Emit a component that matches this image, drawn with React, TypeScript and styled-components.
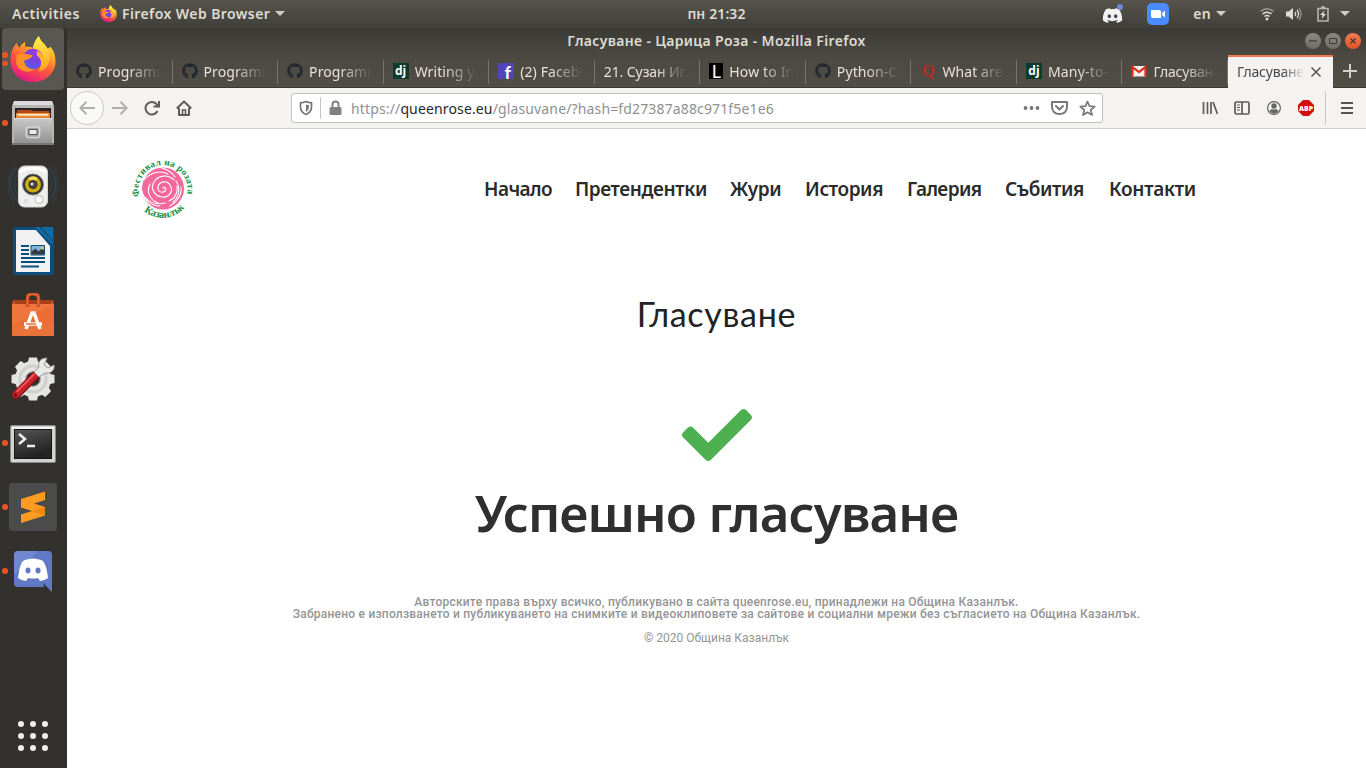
import React from "react";
import styled, { createGlobalStyle, css } from "styled-components";
import { FaCheck, FaGithub, FaDiscord } from "react-icons/fa";

const GlobalStyle = createGlobalStyle`
  * { box-sizing: border-box; }
  body { margin: 0; overflow: hidden; background: #fff; }
  svg { display: block; flex: none; }
`;

const uiFont = css`
  font-family: "Noto Sans", "Open Sans", sans-serif;
`;

const Desktop = styled.div`
  ${uiFont}
  width: 1366px;
  height: 768px;
  display: flex;
  flex-direction: column;
`;

const TopBar = styled.header`
  height: 28px;
  flex: none;
  display: grid;
  grid-template-columns: 1fr auto 1fr;
  align-items: center;
  padding: 0 16px 1px 12px;
  background: linear-gradient(#57544c, #403f3a);
  color: #dfdbd2;
  font-size: 14px;
  font-weight: 600;
`;

const TopGroup = styled.div<{ $end?: boolean }>`
  display: flex;
  align-items: center;
  justify-content: ${(p) => (p.$end ? "flex-end" : "flex-start")};
`;

const Label = styled.span<{ $spacing?: number; $ml?: number; $mr?: number }>`
  white-space: nowrap;
  letter-spacing: ${(p) => p.$spacing ?? 0}px;
  margin-left: ${(p) => p.$ml ?? 0}px;
  margin-right: ${(p) => p.$mr ?? 0}px;
`;

const Caret = styled.i<{ $ml?: number }>`
  border: 5px solid transparent;
  border-top-color: #d0cdc5;
  border-bottom: 0;
  margin-left: ${(p) => p.$ml ?? 5}px;
`;

const Gap = styled.span<{ $w: number }>`
  flex: none;
  width: ${(p) => p.$w}px;
`;

const Workspace = styled.div`
  flex: 1;
  display: flex;
  min-height: 0;
`;

const Dock = styled.nav`
  width: 67px;
  flex: none;
  display: flex;
  flex-direction: column;
  background: #33312d;
`;

const DockItem = styled.div<{ $first?: boolean }>`
  height: ${(p) => (p.$first ? 62 : 64)}px;
  margin-bottom: ${(p) => (p.$first ? 1 : 0)}px;
  display: grid;
  grid-template-columns: 8px 50px;
  align-items: center;
`;

const DockTile = styled.div<{ $active?: boolean }>`
  grid-area: 1 / 1 / 2 / 3;
  margin-left: 2px;
  width: 62px;
  height: 62px;
  border-radius: 4px;
  display: flex;
  align-items: center;
  justify-content: center;
  background: ${(p) => (p.$active ? "#595752" : "transparent")};
`;

const Dots = styled.div`
  grid-area: 1 / 1 / 2 / 2;
  display: flex;
  flex-direction: column;
  align-items: center;
  gap: 3px;
  z-index: 1;
  padding-left: 2px;
`;

const Dot = styled.i`
  width: 5.5px;
  height: 5.5px;
  border-radius: 50%;
  background: #e95420;
`;

const AppsButton = styled.div`
  margin: auto 0 17px 18px;
  display: grid;
  grid-template-columns: repeat(3, 6px);
  gap: 6px;
`;

const AppDot = styled.i`
  height: 6px;
  border-radius: 50%;
  background: #eeeeec;
`;

const Window = styled.main`
  flex: 1;
  min-width: 0;
  display: flex;
  flex-direction: column;
  background: #fff;
`;

const TitleBar = styled.div`
  height: 27px;
  flex: none;
  display: grid;
  grid-template-columns: 1fr auto 1fr;
  align-items: center;
  padding: 0 5px 2px;
  color: #dfdbd2;
  font-size: 14px;
  font-weight: 600;
  background: linear-gradient(#3b3a36, #4c4942);
`;

const WindowButtons = styled.div`
  display: flex;
  justify-content: flex-end;
  gap: 4px;
`;

const WindowButton = styled.span<{ $close?: boolean }>`
  width: 16px;
  height: 16px;
  border-radius: 50%;
  display: flex;
  align-items: center;
  justify-content: center;
  background: ${(p) => (p.$close ? "linear-gradient(#f37b54, #e35425)" : "linear-gradient(#8b8982, #6f6d66)")};
`;

const TabStrip = styled.div`
  height: 33px;
  flex: none;
  display: flex;
  background: linear-gradient(#4c4942, #514e46);
  border-bottom: 1px solid #393834;
`;

const Tab = styled.div`
  width: 105.55px;
  flex: none;
  display: flex;
  align-items: center;
  padding: 0 12px 0 9px;
  gap: 6px;
  color: #e6e2d9;
  font-size: 14px;
  background: linear-gradient(#77756d, #77756d) right 5px / 1px 24px no-repeat;
`;

const TabText = styled.span<{ $spacing?: number; $fade?: number }>`
  flex: 1;
  min-width: 0;
  overflow: hidden;
  white-space: nowrap;
  letter-spacing: ${(p) => p.$spacing ?? 0.1}px;
  mask-image: linear-gradient(to left, transparent 0, #000 ${(p) => p.$fade ?? 32}px);
`;

const ActiveTab = styled(Tab)`
  width: 105px;
  height: 33px;
  background: #f4f3f1;
  color: #45474a;
  border-top: 2px solid #ef7a4e;
  gap: 5px;
  padding: 0 11px 2px 9px;
`;

const NewTab = styled.div`
  flex: 1;
  display: flex;
  align-items: center;
  justify-content: center;
`;

const Favicon = styled.span<{ $bg?: string; $color?: string; $w?: number }>`
  width: ${(p) => p.$w ?? 16}px;
  height: 16px;
  flex: none;
  display: flex;
  align-items: center;
  justify-content: center;
  overflow: hidden;
  background: ${(p) => p.$bg ?? "transparent"};
  color: ${(p) => p.$color ?? "#fff"};
  font: 700 12px/16px "Open Sans", sans-serif;
`;

const QuoraMark = styled(Favicon)`
  font: 700 17px/16px "Liberation Serif", serif;
`;

const FacebookMark = styled(Favicon)`
  font: 700 18px/20px "Lato", sans-serif;
  padding: 3px 0 0 3px;
`;

const LetterMark = styled(Favicon)`
  font: 400 18px/16px "Lato", sans-serif;
`;

const NavBar = styled.div`
  height: 41px;
  flex: none;
  display: flex;
  align-items: center;
  background: #f4f3f1;
  border-bottom: 1px solid #cfcdca;
  padding-left: 3px;
`;

const BackButton = styled.span`
  width: 34px;
  height: 34px;
  border-radius: 50%;
  border: 1px solid #cccac8;
  background: #f9f9f8;
  display: flex;
  align-items: center;
  justify-content: center;
`;

const AddressBar = styled.div`
  width: 812px;
  height: 30px;
  margin-left: 99px;
  display: flex;
  align-items: center;
  padding: 0 6px 0 7px;
  background: #fff;
  border: 1px solid #c4c1bd;
  border-radius: 3px;
`;

const Rule = styled.i<{ $h: number }>`
  width: 1px;
  height: ${(p) => p.$h}px;
  background: #c9c7c5;
`;

const Url = styled.span`
  flex: 1;
  margin-left: 9px;
  font-size: 14px;
  letter-spacing: 0.14px;
  color: #8f9092;
  white-space: nowrap;
`;

const Host = styled.b`
  font-weight: 400;
  color: #25272a;
`;

const BrowserTools = styled.div`
  flex: 1;
  display: flex;
  align-items: center;
  justify-content: flex-end;
  padding-right: 11px;
  gap: 16px;
`;

const Page = styled.section`
  flex: 1;
  display: flex;
  flex-direction: column;
  align-items: center;
`;

const SiteHeader = styled.div`
  width: 100%;
  height: 120px;
  display: flex;
  align-items: center;
  justify-content: space-between;
  padding: 0 170px 0 64px;
`;

const SiteMenu = styled.nav`
  display: flex;
  gap: 24px;
  font: 600 19px/24px "Noto Sans", sans-serif;
  color: #2b2b2b;
`;

const MenuItem = styled.a<{ $w: number; $spacing: number }>`
  width: ${(p) => p.$w}px;
  white-space: nowrap;
  letter-spacing: ${(p) => p.$spacing}px;
`;

const PageTitle = styled.h2`
  margin: 43px 0 0;
  font: 400 34px/44px "Lato", sans-serif;
  letter-spacing: 0.7px;
  color: #222;
`;

const CheckMark = styled.div`
  margin-top: 64px;
  color: #4caf50;
`;

const Headline = styled.h1`
  margin: 12px 0 0;
  font: 600 51px/60px "Noto Sans", sans-serif;
  letter-spacing: -0.9px;
  color: #2f2f2f;
  white-space: nowrap;
`;

const Footer = styled.footer`
  margin-top: 54px;
  text-align: center;
  font: 500 12px/12px Roboto, sans-serif;
  color: #959595;
`;

const FooterLine = styled.div`
  white-space: nowrap;
  letter-spacing: 0.23px;
`;

const Copyright = styled.div`
  margin-top: 12px;
  font-weight: 400;
`;

const FirefoxIcon = ({ size, id }: { size: number; id: string }) => (
  <svg width={size} height={size} viewBox="0 0 46 47">
    <defs>
      <linearGradient id={id + "a"} x1=".8" y1="0" x2=".3" y2="1">
        <stop offset="0" stopColor="#fff44f" />
        <stop offset=".3" stopColor="#ffb229" />
        <stop offset=".6" stopColor="#ff5b38" />
        <stop offset="1" stopColor="#e31587" />
      </linearGradient>
      <radialGradient id={id + "b"} cx=".65" cy=".2" r=".8">
        <stop offset="0" stopColor="#a23be8" />
        <stop offset=".5" stopColor="#7a3fe0" />
        <stop offset="1" stopColor="#5a5de8" />
      </radialGradient>
      <linearGradient id={id + "c"} x1="0" y1="0" x2="0" y2="1">
        <stop offset="0" stopColor="#fff34a" />
        <stop offset="1" stopColor="#ff9b26" />
      </linearGradient>
    </defs>
    <path fill={`url(#${id}a)`} d="M29 0c1 5 6 8 9 13l3-2c4 5 5 10 5 15 0 12-10 21-23 21S0 38 0 25C0 18 2 12 5 9l1-2c1 2 2 4 3 5 2-3 4-5 6-6v5c3 0 6 0 8 1 1-5 3-9 6-12z" />
    <path fill={`url(#${id}c)`} d="M29 0c1 5 6 8 9 13 4 9 2 20-9 24 7-6 6-16 0-21-2-2-4-3-6-4 1-5 3-9 6-12z" />
    <circle cx="23" cy="23.500" r="10.500" fill={`url(#${id}b)`} />
    <path fill="#ff9128" d="M6 20c5-3 11-2 17 0-2 3-5 4-9 5 0 6 5 9 11 9-7 5-17 2-19-6z" />
    <path fill="#ffb52b" d="M27 15c5 2 8 7 7 13 0 4-3 7-6 8 5-5 4-13-1-16z" />
  </svg>
);

const FilesIcon = () => (
  <svg width="44" height="46" viewBox="0 0 44 46">
    <defs>
      <linearGradient id="files" x1="0" y1="0" x2="0" y2="1">
        <stop offset="0" stopColor="#c9c9c9" />
        <stop offset="1" stopColor="#929292" />
      </linearGradient>
    </defs>
    <path d="M3 1h38l2 5v38H1V6z" fill="#b5b5b5" />
    <path d="M3 1h38l1 4H2z" fill="#dcdcdc" />
    <path d="M4 8h36v11H4z" fill="#2a2422" />
    <path d="M6 10h14l2 1h16v3H6z" fill="#b54a18" />
    <path d="M5 13h34v4H5z" fill="#f0953f" />
    <path d="M7 14h30v1.500H7z" fill="#fff0dc" />
    <path d="M5 17h34v2H5z" fill="#dd7b2f" />
    <path d="M3 18h38v25H3z" fill="url(#files)" />
    <path d="M3 18h38v1H3z" fill="#e3e3e3" />
    <rect x="15.500" y="27" width="13" height="10.500" rx="2" fill="#a0a0a0" stroke="#d8d8d8" strokeWidth="1.500" />
    <path d="M18 29.500h8v5h-8z" fill="#ececec" stroke="#555" />
    <path d="M1 43h42v2H1z" fill="#777" />
  </svg>
);

const SpeakerIcon = () => (
  <svg width="50" height="46" viewBox="0 0 50 46">
    <g fill="none" stroke="#304c68">
      <path strokeWidth="1.500" opacity=".7" d="M9 4C0 13 0 27 9 37M41 4c9 9 9 23 0 33" />
      <path strokeWidth="1.500" opacity=".45" d="M6 2C-2 13-2 28 6 39M44 2c8 11 8 26 0 37M11 8c-6 8-6 17 0 25M39 8c6 8 6 17 0 25" />
    </g>
    <rect x="10.500" y="2" width="29" height="41" rx="6" fill="#eeeeec" stroke="#d3d3d3" />
    <path d="M12 8q13-8 26 0" stroke="#fff" strokeWidth="3" fill="none" />
    <circle cx="25" cy="20.500" r="10.500" fill="#343434" stroke="#777" />
    <circle cx="25" cy="20.500" r="8" fill="#c8aa13" />
    <path d="M20 14l5 5 5-5a9 9 0 00-10 0z" fill="#f1db59" />
    <circle cx="25" cy="20.500" r="4" fill="#4a493e" stroke="#242424" />
    <circle cx="24" cy="20" r="1.500" fill="#ddd" />
    <circle cx="31" cy="35.500" r="4" fill="#fafafa" stroke="#bbb" />
    <path d="M16 35h4v4h-4z" fill="#ddd" />
  </svg>
);

const WriterIcon = () => (
  <svg width="42" height="48" viewBox="0 0 42 48">
    <path d="M4 0h36l2 2v43q0 3-3 3H4q-3 0-3-3V3q0-3 3-3z" fill="#0b4f7c" />
    <path d="M23 0h18v18z" fill="#0d6ca6" />
    <path d="M23 0l18 20V28L20 3z" fill="#0b4f7c" />
    <path d="M4 3h20l14 16v26H4z" fill="#f2f2f2" />
    <path d="M28 0l13 14" stroke="#33312d" fill="none" />
    <path d="M9 19h8M9 23h8M9 27h8M9 31h24M9 35h24M9 39.500h18" stroke="#0b4f7c" strokeWidth="2" />
    <path d="M19 18.500h13.500v9.500H19z" fill="#7fb5dc" stroke="#0b4f7c" />
    <path d="M19.500 27.500v-3l4-3 3 3 3-3 3 2v4z" fill="#333c3f" />
    <circle cx="30" cy="21" r="1.500" fill="#e8be42" />
  </svg>
);

const SoftwareIcon = () => (
  <svg width="42" height="44" viewBox="0 0 42 44">
    <path d="M1 7h40v6H1z" fill="#a73f17" />
    <path d="M1 7l3 5H0zM41 7l-3 5h4z" fill="#d45725" />
    <path d="M0 11h42v32H0z" fill="#ed6c33" />
    <path d="M0 33h42v10H0z" fill="#ea7339" />
    <path d="M0 11h42L0 32z" fill="#f28a53" opacity=".4" />
    <path d="M15.500 14V5q0-4 4-4h3q4 0 4 4v9" fill="none" stroke="#ce4d1f" strokeWidth="3.500" />
    <path d="M15.500 13V5q0-4 4-4h3q4 0 4 4v8" fill="none" stroke="#f0713d" />
    <path d="M14 36l6-16h2l6 16M12 31h18" fill="none" stroke="#fff" strokeWidth="3.500" />
    <path d="M14 31h10" stroke="#ed6c33" strokeWidth="1.500" />
  </svg>
);

const SettingsIcon = () => (
  <svg width="46" height="46" viewBox="0 0 46 46">
    <g transform="translate(23 23)">
      {Array.from({ length: 8 }, (_, i) => (
        <path key={i} d="M-4-21.500h8l2 8H-6z" fill="#e4e4e2" transform={`rotate(${i * 45})`} />
      ))}
      <circle r="12.500" fill="none" stroke="#e4e4e2" strokeWidth="11" />
      <circle r="13" fill="none" stroke="#cfcfcd" strokeWidth="3" />
      <circle r="7.500" fill="none" stroke="#a8a8a6" />
    </g>
    <path d="M6 39l20-20" stroke="#791318" strokeWidth="8.500" strokeLinecap="round" />
    <path d="M6 38.500l20-20" stroke="#cb2229" strokeWidth="6.500" strokeLinecap="round" />
    <path d="M7 35.500l17-17" stroke="#ee6769" strokeWidth="1.500" strokeLinecap="round" />
    <path d="M24 16l5 5 6-4c6 1 10-3 9-8l-6 3-4-3 3-7c-7 0-9 4-8 9z" fill="#e9e9e8" stroke="#999" />
    <circle cx="5.500" cy="39" r="1.500" fill="#571015" />
  </svg>
);

const TerminalIcon = () => (
  <svg width="46" height="40" viewBox="0 -2 46 40">
    <defs>
      <linearGradient id="terminal" x1="0" y1="0" x2=".4" y2="1">
        <stop offset="0" stopColor="#555" />
        <stop offset="1" stopColor="#222" />
      </linearGradient>
    </defs>
    <rect x=".5" y=".5" width="45" height="37" rx="1.500" fill="#d2d2d2" stroke="#8a8a8a" />
    <path d="M2 2h42v2H2z" fill="#f2f2f2" />
    <path d="M4 4h38v30H4z" fill="#161616" />
    <path d="M5 5h36v28H5z" fill="url(#terminal)" />
    <path d="M9 9l6 5-6 5M17 21h8" stroke="#eee" strokeWidth="2.500" fill="none" />
  </svg>
);

const SublimeIcon = () => (
  <svg width="48" height="48" viewBox="0 0 48 48">
    <rect width="48" height="48" rx="3" fill="#4b4b4b" />
    <path d="M12 16L36 8.500V17l-11 3.500L36 24v8.500L12 40v-8.500L23 28l-11-3.500z" fill="#ff9b20" />
    <path d="M22 28l14-3.500v8z" fill="#ee8a14" />
  </svg>
);

const DiscordIcon = () => (
  <svg width="38" height="41" viewBox="0 0 38 41">
    <path d="M4 0h30q4 0 4 4v37l-9-9 1 4H4q-4 0-4-4V4q0-4 4-4z" fill="#6078c6" />
    <path d="M0 24L24 0H4Q0 0 0 4z" fill="#7c92d7" opacity=".6" />
    <path d="M11 9q8-3 16 0 5 1 7 18-4 3-8 3l-2-3q-5 1-10 0l-2 3q-4 0-8-3 2-17 7-18z" fill="#fff" />
    <ellipse cx="14" cy="19.500" rx="2.500" ry="3" fill="#6078c6" />
    <ellipse cx="24" cy="19.500" rx="2.500" ry="3" fill="#6078c6" />
  </svg>
);

const dockApps: { icon: React.ReactNode; dots: number; active?: boolean }[] = [
  { icon: <FirefoxIcon size={46} id="dock" />, dots: 2, active: true },
  { icon: <FilesIcon />, dots: 1 },
  { icon: <SpeakerIcon />, dots: 0 },
  { icon: <WriterIcon />, dots: 0 },
  { icon: <SoftwareIcon />, dots: 0 },
  { icon: <SettingsIcon />, dots: 0 },
  { icon: <TerminalIcon />, dots: 1 },
  { icon: <SublimeIcon />, dots: 1 },
  { icon: <DiscordIcon />, dots: 1 },
];

const github = <Favicon $color="#24292e"><FaGithub size={16} /></Favicon>;
const django = <Favicon $bg="#0c3c2e">dj</Favicon>;

const GmailIcon = () => (
  <svg width="16" height="16" viewBox="0 0 16 16">
    <path d="M1 3h14v10.500H1z" fill="#f1efed" />
    <path d="M1.500 13.500V4L8 9l6.500-5v9.500" fill="none" stroke="#dd2c20" strokeWidth="2.200" />
  </svg>
);

const tabs: { icon?: React.ReactNode; text: string; spacing?: number }[] = [
  { icon: github, text: "Programming" },
  { icon: github, text: "Programming" },
  { icon: github, text: "Programming" },
  { icon: django, text: "Writing your" },
  { icon: <FacebookMark $bg="#5245b5">f</FacebookMark>, text: "(2) Facebook" },
  { text: "21. Сузан Иглика", spacing: -0.1 },
  { icon: <LetterMark $bg="#000" $w={14}>L</LetterMark>, text: "How to Install", spacing: 0.15 },
  { icon: github, text: "Python-Course" },
  { icon: <QuoraMark $color="#b92b27">Q</QuoraMark>, text: "What are the" },
  { icon: django, text: "Many-to-one", spacing: 0.2 },
  { icon: <GmailIcon />, text: "Гласуване", spacing: -0.2 },
];

const RoseLogo = () => (
  <svg width="64" height="62" viewBox="-1 -2 64 62">
    <defs>
      <path id="arcTop" d="M7.600 36.500A24.500 24.500 0 1 1 54.500 37" />
      <path id="arcBottom" d="M8.500 47.500A29 29 0 0 0 54 46" />
    </defs>
    <circle cx="31" cy="28.500" r="21" fill="#f4689b" />
    <g fill="none" stroke="#fff" strokeWidth="1.100" strokeLinecap="round">
      <path d="M31 28c2-2 4 1 2 3-3 3-8 0-7-4 1-6 9-7 12-2 4 6-1 13-8 12-8-1-12-9-8-15 4-7 14-8 20-2" />
      <path d="M12 20c7-8 16-10 24-6M10 31c2 9 9 15 18 15M13 37c5 6 12 8 20 6M44 21c5 7 3 16-3 21M49 27c1 8-4 15-11 19M18 24c-4 8 0 16 8 19" />
      <path d="M27 7c8 2 13 5 16 10M37 41c7-3 9-10 8-15" />
    </g>
    <g fill="#119149" fontFamily="Liberation Serif, serif" fontWeight="700" fontSize="9.500">
      <text><textPath href="#arcTop" textLength="88">Фестивал на розата</textPath></text>
      <text fontSize="10.500"><textPath href="#arcBottom" startOffset="5" textLength="45">Казанлък</textPath></text>
    </g>
  </svg>
);

const menu = [
  { text: "Начало", w: 67, spacing: -0.55 },
  { text: "Претендентки", w: 131, spacing: -0.4 },
  { text: "Жури", w: 51, spacing: -0.4 },
  { text: "История", w: 78, spacing: -0.4 },
  { text: "Галерия", w: 74, spacing: -0.6 },
  { text: "Събития", w: 80, spacing: -0.4 },
  { text: "Контакти", w: 87, spacing: -0.3 },
];

const line = { fill: "none", stroke: "#5b5b5b", strokeWidth: 2 } as const;

export default function App() {
  return (
    <Desktop>
      <GlobalStyle />
      <TopBar>
        <TopGroup>
          <Label $spacing={0.55}>Activities</Label>
          <Gap $w={20} />
          <FirefoxIcon size={17} id="bar" />
          <Label $ml={5} $spacing={0.42}>Firefox Web Browser</Label>
          <Caret />
        </TopGroup>
        <Label $ml={71} $spacing={0.1}>пн 21:32</Label>
        <TopGroup $end>
          <svg width="22" height="22" viewBox="0 0 22 22">
            <g transform="translate(0 2)"><FaDiscord size={21} color="#f2f2f2" /></g>
            <circle cx="18" cy="4" r="3" fill="#7289da" />
          </svg>
          <Gap $w={23} />
          <svg width="22" height="22" viewBox="0 0 22 22">
            <rect width="22" height="22" rx="5" fill="#4a8cff" />
            <path d="M4 7h8q2 0 2 2v6H6q-2 0-2-2zM15 10l3-2.500v7L15 12z" fill="#fff" />
          </svg>
          <Label $ml={24} $spacing={0.3}>en</Label>
          <Caret />
          <Gap $w={34} />
          <svg width="14" height="14" viewBox="0 0 14 14" fill="none" strokeWidth="1.600">
            <path d="M.5 4.500q6.500-5.500 13 0" stroke="#99978f" />
            <path d="M2.500 7q4.500-3.600 9 0M4.500 9.500q2.500-2 5 0" stroke="#e0ddd5" />
            <circle cx="7" cy="12" r="1.500" fill="#e0ddd5" />
          </svg>
          <Gap $w={12} />
          <svg width="16" height="14" viewBox="0 0 16 14" fill="none" stroke="#dfdbd2" strokeWidth="1.300">
            <path d="M0 4.500h2.500L7 1v12L2.500 9.500H0z" fill="#dfdbd2" stroke="none" />
            <path d="M9 5q1.500 2 0 4M11 3q3 4 0 8" />
            <path d="M13 1q4 6 0 12" stroke="#99978f" />
          </svg>
          <Gap $w={15} />
          <svg width="12" height="16" viewBox="0 0 12 16">
            <path d="M1 2.500h10v12.500H1zM4 1h4" fill="none" stroke="#b8b5ae" strokeWidth="1.600" />
            <path d="M7.500 4.500L3 9h2.500l-1 4L9 8H6.500z" fill="#e2dfd8" />
          </svg>
          <Caret $ml={11} />
        </TopGroup>
      </TopBar>
      <Workspace>
        <Dock>
          {dockApps.map((app, i) => (
            <DockItem key={i} $first={i === 0}>
              <DockTile $active={app.active}>{app.icon}</DockTile>
              <Dots>{Array.from({ length: app.dots }, (_, n) => <Dot key={n} />)}</Dots>
            </DockItem>
          ))}
          <AppsButton>{Array.from({ length: 9 }, (_, i) => <AppDot key={i} />)}</AppsButton>
        </Dock>
        <Window>
          <TitleBar>
            <span />
            <Label $spacing={0.35}>Гласуване - Царица Роза - Mozilla Firefox</Label>
            <WindowButtons>
              <WindowButton><svg width="8" height="8"><path d="M0 4h8" stroke="#3c3b37" strokeWidth="1.300" /></svg></WindowButton>
              <WindowButton><svg width="8" height="8"><path d="M.5 1.500h7v5h-7z" fill="none" stroke="#3c3b37" /></svg></WindowButton>
              <WindowButton $close><svg width="6" height="6"><path d="M.5.5l5 5M5.500.5l-5 5" stroke="#3c3b37" strokeWidth="1.200" /></svg></WindowButton>
            </WindowButtons>
          </TitleBar>
          <TabStrip>
            {tabs.map((tab, i) => (
              <Tab key={i}>
                {tab.icon}
                <TabText $spacing={tab.spacing}>{tab.text}</TabText>
              </Tab>
            ))}
            <ActiveTab>
              <TabText $spacing={-0.2} $fade={22}>Гласуване</TabText>
              <svg width="12" height="12"><path d="M1.500 1.500l9 9m0-9l-9 9" stroke="#555" strokeWidth="1.500" /></svg>
            </ActiveTab>
            <NewTab><svg width="14" height="14"><path d="M7 0v14M0 7h14" stroke="#d3d0c8" strokeWidth="2" /></svg></NewTab>
          </TabStrip>
          <NavBar>
            <BackButton><svg width="16" height="14" {...line} stroke="#b1b0af"><path d="M16 7H1M7.500.8L1.300 7l6.200 6.200" /></svg></BackButton>
            <Gap $w={8} />
            <svg width="16" height="14" {...line} stroke="#b1b0af"><path d="M0 7h15M8.500.8L14.700 7l-6.200 6.200" /></svg>
            <Gap $w={16} />
            <svg width="16" height="16" {...line}><path d="M13.500 11A6.300 6.300 0 1 1 12.500 4L14 5.500M15 1v5.500H9.500" /></svg>
            <Gap $w={16} />
            <svg width="16" height="16" {...line}><path d="M.8 8.500L8 1.500l7.200 7M3 8v7h10V8" strokeLinejoin="round" /><path d="M6.500 15v-5h3v5" strokeWidth="1.600" /></svg>
            <AddressBar>
              <svg width="14" height="16" fill="none" stroke="#777"><path d="M7 1.500q3 1.500 5.500 1.200V7q0 5-5.500 7.500Q1.500 12 1.500 7V2.700Q4 3 7 1.500z" strokeWidth="1.700" strokeLinejoin="round" /><path d="M7 4.500q1.500.6 3 .7V7q0 3-3 5z" fill="#777" stroke="none" /></svg>
              <Gap $w={7} />
              <Rule $h={22} />
              <Gap $w={8} />
              <svg width="13" height="16"><path d="M3.500 8V4.500a3 3 0 016 0V8" fill="none" stroke="#818181" strokeWidth="2" /><rect x=".5" y="7" width="12" height="8" rx="1.500" fill="#818181" /></svg>
              <Url>https://<Host>queenrose.eu</Host>/glasuvane/?hash=fd27387a88c971f5e1e6</Url>
              <svg width="17" height="16" fill="#777"><circle cx="2.500" cy="8" r="1.900" /><circle cx="8.500" cy="8" r="1.900" /><circle cx="14.500" cy="8" r="1.900" /></svg>
              <Gap $w={11} />
              <svg width="17" height="16" {...line} stroke="#777"><path d="M1 2h15v5q-.5 7-7.500 7T1 7zM5 6l3.500 3.500L12 6" strokeLinejoin="round" strokeLinecap="round" /></svg>
              <Gap $w={11} />
              <svg width="17" height="17" {...line} stroke="#777" strokeWidth="1.700"><path d="M8.500 1.500l2 4.700 5.200.4-4 3.400 1.300 5-4.500-2.700L4 15l1.300-5-4-3.400 5.200-.4z" strokeLinejoin="round" /></svg>
            </AddressBar>
            <BrowserTools>
              <svg width="16" height="16" {...line}><path d="M1.500 2v12M5.500 2v12M9 2v12M11 2l4.500 12" strokeWidth="1.700" /></svg>
              <svg width="16" height="16" {...line} strokeWidth="1.700"><rect x="1" y="2" width="14" height="12" rx="1.500" /><path d="M8 2v12" /><path d="M3 5h3M3 7.500h3M3 10h3" strokeWidth="1" /></svg>
              <svg width="16" height="16"><circle cx="8" cy="8" r="6.400" fill="none" stroke="#666" strokeWidth="1.200" /><circle cx="8" cy="6" r="2.700" fill="#666" /><path d="M3.500 11q1-2 3-1.800 1.500.6 3 0 2-.2 3 1.800-2 2.700-4.500 2.700T3.500 11z" fill="#666" /></svg>
              <svg width="16" height="16"><path d="M5 0h6l5 5v6l-5 5H5l-5-5V5z" fill="#d50c0c" /><text x="8" y="10.800" textAnchor="middle" textLength="14" lengthAdjust="spacingAndGlyphs" fill="#fff" fontFamily="Open Sans" fontSize="7.500" fontWeight="800">ABP</text></svg>
            </BrowserTools>
            <Rule $h={34} />
            <Gap $w={15} />
            <svg width="12" height="14"><path d="M0 2h12M0 7h12M0 12h12" stroke="#555" strokeWidth="1.800" /></svg>
            <Gap $w={13} />
          </NavBar>
          <Page>
            <SiteHeader>
              <RoseLogo />
              <SiteMenu>
                {menu.map((m) => <MenuItem key={m.text} $w={m.w} $spacing={m.spacing}>{m.text}</MenuItem>)}
              </SiteMenu>
            </SiteHeader>
            <PageTitle>Гласуване</PageTitle>
            <CheckMark><FaCheck size={70} /></CheckMark>
            <Headline>Успешно гласуване</Headline>
            <Footer>
              <FooterLine>Авторските права върху всичко, публикувано в сайта queenrose.eu, принадлежи на Община Казанлък.</FooterLine>
              <FooterLine>Забранено е използването и публикуването на снимките и видеоклиповете за сайтове и социални мрежи без съгласието на Община Казанлък.</FooterLine>
              <Copyright>© 2020 Община Казанлък</Copyright>
            </Footer>
          </Page>
        </Window>
      </Workspace>
    </Desktop>
  );
}
